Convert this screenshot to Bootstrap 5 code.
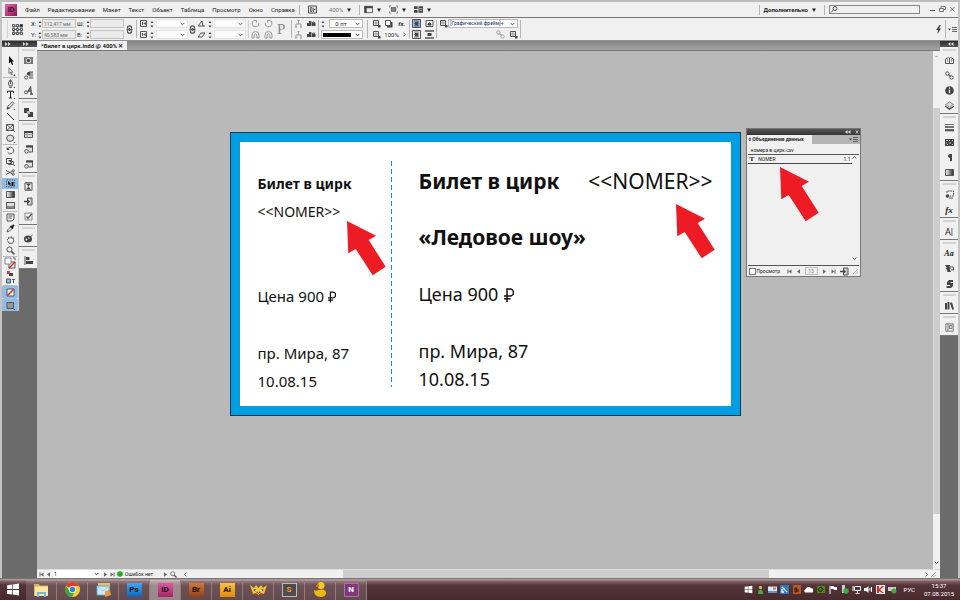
<!DOCTYPE html>
<html lang="ru">
<head>
<meta charset="utf-8">
<meta name="viewport" content="width=device-width, initial-scale=1">
<title>Билет в цирк.indd</title>
<link rel="stylesheet" href="https://cdn.jsdelivr.net/npm/bootstrap@5.3.0/dist/css/bootstrap.min.css">
<style>
:root{--panel:#f0f0f0;--dark:#6b6b6b;--rule:#8a8a8a}
body{font-family:Roboto,"Noto Sans",sans-serif;font-size:6px;line-height:8px;color:#222;background:#ccc}
button,input,select{font:inherit;color:inherit;border:0;padding:0;margin:0;background:transparent;border-radius:0;min-width:0}
svg{display:block;flex:none}
.i{width:9px;height:9px;fill:none;stroke:#555;stroke-width:1}
.i .f,.f{fill:#444;stroke:none}
.app{background:var(--panel);border:2px solid #c4c4c4;border-top-color:#bdbdbd;border-bottom:0}
.menubar{height:16px;border-bottom:1px solid #777;padding-left:3px}
.menubar a{color:#222;text-decoration:none}
.logo{width:12px;height:12px;background:linear-gradient(135deg,#e069a8,#8d1157);color:#2d0019;font-size:7px;line-height:12px;text-align:center;font-weight:600}
.menus{gap:8px;margin-left:8px}
.rule{width:1px;height:10px;background:#b5b5b5;flex:none}
.caret{width:4px;height:4px;fill:#222}
.search{width:91px;height:9px;border:1px solid #888}
.search input{width:100%}
.wbtn{width:10px;height:10px}
.ctl{height:23px;border-bottom:1px solid #909090;padding:0 1px 0 3px}
.ctl .rule{height:18px;margin:0 2px}
.grp{display:grid;grid-template-rows:9px 9px;row-gap:2px;align-items:center;flex:none}
.g-xy{grid-template-columns:7px 4px 34px}
.g-wh{grid-template-columns:9px 4px 34px;margin:0 1px 0 1px}
.g-sc{grid-template-columns:11px 6px 32px}
.g-2{grid-template-columns:9px 9px;column-gap:4px}
.g-st{grid-template-columns:8px 34px}
.g-fx{grid-template-columns:12px 14px 9px}
.fld{height:9px;border:1px solid #c2c2c2;background:#ebebeb;line-height:7px;font-size:5px;color:#666;padding-left:1px;width:100%}
.sel{height:9px;width:100%;background:#fff url("data:image/svg+xml,%3Csvg xmlns='http://www.w3.org/2000/svg' width='5' height='4'%3E%3Cpath d='M.7 1l1.8 1.8L4.3 1' fill='none' stroke='%23444'/%3E%3C/svg%3E") right 2px center no-repeat;border:1px solid #bbb;appearance:none;line-height:7px;padding-left:5px}
.sel.off{border-color:#e2e2e2;opacity:.8}
.sel.obj{padding-left:1px;font-size:5px;color:#14306a}
.stroke{background-image:linear-gradient(#000,#000),url("data:image/svg+xml,%3Csvg xmlns='http://www.w3.org/2000/svg' width='5' height='4'%3E%3Cpath d='M.7 1l1.8 1.8L4.3 1' fill='none' stroke='%23444'/%3E%3C/svg%3E");background-size:28px 4px,5px 4px;background-position:1px center,right 2px center;background-repeat:no-repeat}
.spin{width:4px;height:8px;fill:#444}
.on{background:#8fbde8!important}
.sel-frame{width:70px}
.bigp{font:15px/16px 'Liberation Serif',serif;color:#888;margin:0 4px}
.darkbg{background:var(--dark)}
.dockhead{height:6px;background:linear-gradient(#2e2e2e,#555);color:#ddd}
.dockhead svg{width:6px;height:4px;fill:#ddd;margin-left:3px}
.tools{width:17px;background:var(--panel);border-right:1px solid #ccc;padding:8px 0 0}
.tools button,.dock button{display:flex;width:100%;align-items:center;justify-content:center}
.tools button{height:11px}
.tools hr,.dock hr{margin:0 1px;height:1px;border:0;background:#bbb;opacity:1;flex:none}
.tools .mini{height:8px}
.tools .tall{height:12px}
.dock{background:var(--panel);border-bottom:1px solid #777;padding-top:6px;background-image:linear-gradient(#d4d4d4,#d4d4d4);background-size:calc(100% - 5px) 2px;background-position:center 2px;background-repeat:no-repeat}
.dock button{height:15px}
.dockcol{width:18px}
.tabs{height:10px;background:linear-gradient(#858585,#a2a2a2);border-bottom:1px solid #777}
.tab{height:9px;background:#f2f2f2;padding:0 4px;font-weight:700;width:90px}
.paste{background:#b9b9b9;padding-top:81px}
.stage{width:511px}
.ticket{border:1px solid #173a50;height:284px;padding:9px;background:#009fe3}
.sheet{background:#fff;height:100%;font-family:"Noto Sans","Open Sans",sans-serif;color:#111}
.stub{flex:none;width:151px;padding:28px 0 0 18px;font-size:15px;line-height:28px}
.perf{flex:none;width:1px;height:226px;margin-top:19px;background:repeating-linear-gradient(#009fe3 0 5px,#fff 5px 8px)}
.body-part{min-width:0;padding:25px 0 0 27px;font-size:18px;line-height:28px}
.sheet p{margin:0;white-space:nowrap}
.g28{margin-top:28px!important}.g56{margin-top:56px!important}.g29{margin-top:29px!important}
.ttl{font-weight:700;font-size:21px}
.stub .ttl,.stub .num{font-size:14px}
.num{font-size:21px}
.ruble{width:10px;height:14px;stroke:#111;fill:none;display:inline-block;vertical-align:-1px;margin-left:6px}
.stub .ruble{width:8px;height:12px;margin-left:4px}
.arrow{position:absolute;width:39px;height:55px;fill:#ed1c24}
.a1{left:117px;top:89px}.a2{left:446px;top:72px}.a3{left:33px;top:38px}
.datapanel{position:absolute;left:516px;top:-4px;width:115px;height:149px;background:var(--panel);border:1px solid #777;font-size:5px;line-height:8px}
.dp-head{height:6px;background:linear-gradient(#555,#333)}
.dp-tabs{height:9px;background:#b4b4b4;padding-right:2px}
.dp-tab{background:var(--panel);width:65px;font-weight:700;padding-left:2px;height:9px}
.dp-src{height:11px;padding:2px 3px 0;margin:0 1px;border-bottom:1px solid #555}
.dp-row{height:9px;border-bottom:1px solid #444;margin-left:1px;width:104px;padding:0 1px 0 2px}
.dp-sc{width:8px}
.dp-foot{height:11px;border-top:1px solid #555;margin:0 1px;padding:0 1px}
.dp-foot input[type=checkbox]{appearance:none;width:7px;height:7px;border:1px solid #777;background:#fff;margin-right:1px}
.dp-foot input[type=text]{width:13px;height:8px;border:1px solid #bbb;text-align:center;color:#777;font-size:5px}
.n{width:5px;height:5px;fill:#666;stroke:#666}
.vbar{width:7px;background:var(--panel)}
.vbar .thumb{background:#cdcdcd;border-left:1px solid #ddd;flex:404}
.status{height:9px;border-top:1px solid #ddd;background:var(--panel);font-size:5px;padding-left:2px;gap:2px}
.status .pg{width:48px;height:8px;border:0;padding-left:1px;flex:none}
.hbar{gap:0}
.hthumb{background:#cdcdcd;flex:431;height:8px}
.taskbar{height:22px;background:linear-gradient(#a79496 0 1px,#8a6669 2px,#54353a 6px,#482a2d);border-top:1px solid #777;color:#fff}
.tb{width:31px;height:20px;display:flex;align-items:center;justify-content:center;border-right:1px solid #967b7e;background:#ffffff26}
.tb.start{width:26px}
.tb.cur{background:#ffffff70}
.tb svg{width:17px;height:17px}
.app-ic{width:15px;height:14px;font-size:8px;line-height:14px;font-weight:700;text-align:center;color:#111}
.ps{background:linear-gradient(#45a7ef,#1263b8)}.id{background:linear-gradient(#d65a9c,#a52566)}.br{background:linear-gradient(#cf7840,#924018)}.ai{background:linear-gradient(#ffc13d,#e08a09)}
.sb{background:#4d4d4d;border:1px solid #bbb;color:#f69220;line-height:12px}.on-n{background:#80397b;color:#fff;border:1px solid #a871a4;line-height:12px}
.tray{gap:3px}
.tray svg{width:9px;height:9px}
.clock{line-height:8px;width:34px}
</style>
<script src="https://cdn.jsdelivr.net/npm/bootstrap@5.3.0/dist/js/bootstrap.bundle.min.js"></script>
</head>
<body class="d-flex flex-column vh-100 overflow-hidden">
<svg width="0" height="0" class="position-absolute" aria-hidden="true">
<symbol id="caret" viewBox="0 0 4 4"><path d="M0 .5h4L2 4z"/></symbol>
<symbol id="spin" viewBox="0 0 4 8"><path d="M.5 3L2 1l1.5 2zM.5 5.5h3L2 7.5z"/></symbol>
<symbol id="dbl" viewBox="0 0 6 4"><path d="M0 2l2.5-2v4zM3 2l2.5-2v4z"/></symbol>
<symbol id="dbr" viewBox="0 0 6 4"><path d="M2.5 2L0 0v4zM5.5 2L3 0v4z"/></symbol>
<symbol id="chain" viewBox="0 0 9 9"><path d="M2.500 3.500V2.500a2 1.700 0 014 0v1M2.500 5.500v1a2 1.700 0 004 0v-1M4.500 3v3M1.500 4.500h6" stroke-width="1.300"/></symbol>
<symbol id="scx" viewBox="0 0 9 9"><path d="M1.500 1.500h6v6h-6zM3.500 3v3"/><path class="f" d="M4.200 4.500L6.700 3v3z"/></symbol>
<symbol id="rot" viewBox="0 0 9 9"><path d="M3.500 1.200a3.400 3.400 0 104.300 2.600M3.200 1.300h2.300V3.500" stroke="#999"/></symbol>
<symbol id="rotr" viewBox="0 0 9 9"><path d="M5.500 1.200a3.400 3.400 0 11-4.300 2.600M5.800 1.300H3.500V3.500" stroke="#999"/></symbol>
<symbol id="flip" viewBox="0 0 9 9"><path d="M1 8V5a3.400 3.400 0 017 0v3H5.800V5.200a1.200 1.200 0 00-2.600 0V8z" stroke="#999"/></symbol>
<symbol id="tree" viewBox="0 0 9 9"><path d="M4.500 1v4M2 8V5h5v3M1 8h2M6 8h2M3.500 1.500h2" stroke="#999"/></symbol>
<symbol id="treed" viewBox="0 0 9 9"><path class="f" d="M0 7V4h2V2h2v5zM4.500 7V2l2 2V2l2 2v3z"/></symbol>
<symbol id="dsq" viewBox="0 0 9 9"><path d="M1.500 1.500h5v5h-5z"/><path d="M3 3h2v2H3z" stroke="#999"/><path class="f" d="M6 6h2.500v2.500H6z"/></symbol>
<symbol id="shadow" viewBox="0 0 9 9"><path class="f" d="M3 3h5.500v5.500H3z"/><path d="M1.500 1.500h5v5h-5z" fill="#fff"/></symbol>
<symbol id="wrap1" viewBox="0 0 9 9"><path d="M.5.5h8v8h-8z"/><path class="f" d="M3 3h3.500v3.500H3z"/><path d="M2 2h5M2 4.500h1M2 7h5" stroke-width=".8"/></symbol>
<symbol id="wrap2" viewBox="0 0 9 9"><path d="M1 1.500h7v6H1z"/><path d="M2.500 5.500l2-2 2 2"/><path class="f" d="M3 4h3v2.500H3z"/></symbol>
<symbol id="wrap3" viewBox="0 0 9 9"><path d="M0 1h9M0 8h9" stroke-width="1.500"/><path class="f" d="M2.500 3h4v3h-4z"/></symbol>
<symbol id="bolt" viewBox="0 0 9 9"><path class="f" d="M5.500 0L2 5h2L3.500 9 7 3.500H5L7 0z"/></symbol>
<symbol id="pmenu" viewBox="0 0 9 9"><path class="f" d="M0 3.500h3L1.500 5.500z"/><path d="M4 2.500h5M4 4.500h5M4 6.500h5" stroke-width=".9"/></symbol>
<symbol id="ptr" viewBox="0 0 9 9"><path class="f" d="M3 0v7.500l1.700-1.600L6 9l1.200-.6L6 5.500h2z" style="fill:#111"/></symbol>
<symbol id="ptrw" viewBox="0 0 9 9"><path d="M3 .8v5.700l1.500-1.300L5.500 8l.8-.5-1-2.300h1.500z" fill="#fff" stroke-width=".8"/><path class="f" d="M7 9h2V7z"/></symbol>
<symbol id="pen" viewBox="0 0 9 9"><path d="M4.500.5L2.300 4l1 3h2.500l1-3zM4.500 1v4M3 8.300h3"/><path class="f" d="M7.500 9H9V7.500z"/></symbol>
<symbol id="typ" viewBox="0 0 9 9"><path d="M1.500 3V1.200h6V3M4.500 1v7M3 8h3" stroke="#222"/><path class="f" d="M7.500 9H9V7.500z"/></symbol>
<symbol id="pencil" viewBox="0 0 9 9"><path d="M1 8l.6-2.500L6.500.8l1.500 1.500-5 5z"/><path class="f" d="M1 8.500l.6-3 2.400 2zM7.500 9H9V7.500z"/></symbol>
<symbol id="line" viewBox="0 0 9 9"><path d="M1 1l7 7" stroke="#333"/></symbol>
<symbol id="xbox" viewBox="0 0 9 9"><path d="M.5 1.500h7v6h-7zM.5 1.500l7 6M7.500 1.500l-7 6"/><path class="f" d="M7.500 9H9V7.500z"/></symbol>
<symbol id="ell" viewBox="0 0 9 9"><ellipse cx="4.200" cy="4.200" rx="3.500" ry="3.200" fill="#ddd"/><path class="f" d="M7.500 9H9V7.500z"/></symbol>
<symbol id="rotate" viewBox="0 0 9 9"><path d="M2 2.300a3.300 3.300 0 11-.4 3.900" stroke-dasharray="5 .7"/><path class="f" d="M.7 1v3h3z"/></symbol>
<symbol id="scale" viewBox="0 0 9 9"><path d="M.5 1.500h5v5h-5zM5.500 4.500h2v3h-5v-1"/><path class="f" d="M2 3h3v3zM7.500 9H9V7.500z"/></symbol>
<symbol id="sciss" viewBox="0 0 9 9"><path d="M0 2.500l6 3M0 6.500l6-3"/><circle cx="7.200" cy="2.800" r="1.100"/><circle cx="7.200" cy="6.200" r="1.100"/></symbol>
<symbol id="free" viewBox="0 0 9 9"><path d="M.5 1h8v7h-8z" stroke-dasharray="1.500 1"/><path class="f" d="M2 2v4l1-1 1 2 1-.5-1-2h1zM5.500 3h2v4h-2z" style="fill:#111"/></symbol>
<linearGradient id="gr"><stop stop-color="#fff"/><stop offset="1" stop-color="#222"/></linearGradient>
<symbol id="grad" viewBox="0 0 9 9"><path d="M.5 1.500h8v6h-8z" fill="url(#gr)"/></symbol>
<symbol id="feath" viewBox="0 0 9 9"><path d="M.5 1.500h8v6h-8z" fill="#ddd"/><path class="f" d="M1 5h7v2.500H1z" style="fill:#888"/></symbol>
<symbol id="note" viewBox="0 0 9 9"><path d="M1 1h7v5L6 8H1zM2.500 3h4M2.500 5h3"/></symbol>
<symbol id="eye" viewBox="0 0 9 9"><path d="M1 8l1-2.500 3-3 1.500 1.500-3 3z" fill="#fff"/><path d="M4.500 2l2.500 2.500M6 3l2-2" stroke-width="1.800" stroke="#222"/></symbol>
<symbol id="hand" viewBox="0 0 9 9"><path d="M2 5L1 4M3 8.300L1.500 5.500M2.500 4V2M4 3.500v-2M5.500 3.500v-2M7 4V2.500l.8 3L6.500 8.300H3" stroke-width=".9"/></symbol>
<symbol id="zoomi" viewBox="0 0 9 9"><circle cx="3.500" cy="3.500" r="2.600"/><path d="M5.400 5.400l3 3" stroke-width="1.700"/></symbol>
<symbol id="fs" viewBox="0 0 12 12"><path d="M5 5h6v6H5z" fill="#fff"/><path d="M5 11l6-6" stroke="#e22" stroke-width="1.500"/><path d="M1 1h6v6H1z" fill="#fff" stroke="#888"/><path d="M9 1h2v2"/></symbol>
<symbol id="fmt" viewBox="0 0 9 9"><path d="M.5 2h4v4h-4z" fill="#8fbde8"/><path d="M6 2.500h3M7.500 3v3"/></symbol>
<symbol id="mix" viewBox="0 0 9 9"><path class="f" d="M1 2h3v3H1z" style="fill:#c44"/><path class="f" d="M3 4h4v3H3z"/></symbol>
<symbol id="none" viewBox="0 0 9 9"><path d="M1 1h7v7H1z" fill="#fff"/><path d="M1.500 7.500l6-6" stroke="#e22" stroke-width="1.600"/></symbol>
<symbol id="scr" viewBox="0 0 9 9"><path d="M1 1.500h6.500v6H1z" fill="#999"/><path class="f" d="M7.500 9H9V7.500z"/></symbol>
<symbol id="dotbox" viewBox="0 0 9 9"><path class="f" d="M0 1h9v7H0z" style="fill:#777"/><circle cx="4.500" cy="4.500" r="2.500" fill="#eee" stroke="none"/><circle cx="4.500" cy="4.500" r="1.700" class="f"/></symbol>
<symbol id="pstyle" viewBox="0 0 9 9"><path d="M5 1h4M6 1v7M8 1v7"/><path class="f" d="M6 1H4.500a1.700 1.700 0 000 3.400H6z"/><circle cx="2.200" cy="6.500" r="1.600"/></symbol>
<symbol id="cstyle" viewBox="0 0 9 9"><path d="M3.500 6.500L6.500 1l1 7M4.500 5h3M6 8h3" stroke-width="1.300"/><circle cx="2" cy="6.300" r="1.500"/></symbol>
<symbol id="path" viewBox="0 0 9 9"><path class="f" d="M0 0h5v5H0zM4 4h5v5H4z"/><path d="M3 3h3v3H3z" fill="#bbb" stroke="none"/></symbol>
<symbol id="tbl" viewBox="0 0 9 9"><path d="M.5 1.500h8v6h-8z" fill="#ddd"/><path d="M3 1v7M.5 4.500h8" stroke="#999"/><path class="f" d="M0 1h9v2H0z"/></symbol>
<symbol id="tblc" viewBox="0 0 9 9"><path d="M2.500 1h6v6H4.500" fill="#ddd"/><path class="f" d="M2 .5h7v2H2z"/><circle cx="2.500" cy="6.300" r="1.800" fill="#eee"/></symbol>
<symbol id="hour" viewBox="0 0 9 9"><path d="M1 .7h7v7.600H1z"/><path class="f" d="M2 1.500h5L4.500 4.500 7 7.500H2l2.500-3z"/></symbol>
<symbol id="into" viewBox="0 0 9 9"><path d="M3.500 1h4.500v7H3.500z" fill="#ccc"/><path class="f" d="M0 3.800h3V2l3 2.500L3 7V5.200H0z"/></symbol>
<symbol id="check" viewBox="0 0 9 9"><path d="M1 1h7v7H1z" stroke="#888"/><path d="M2.500 4.500l1.500 2L7.500 2" stroke-width="1.300"/></symbol>
<symbol id="pal" viewBox="0 0 9 9"><ellipse cx="4" cy="5" rx="4" ry="3.500" class="f"/><circle cx="2.500" cy="5.500" r=".9" fill="#fff" stroke="none"/><circle cx="5" cy="4" r=".8" fill="#fff" stroke="none"/><path d="M5 4l3.500-3"/></symbol>
<symbol id="align" viewBox="0 0 9 9"><path d="M1 0v9"/><path class="f" d="M2 1h3.500v3H2zM2 5h7v3H2z"/></symbol>
<symbol id="book" viewBox="0 0 9 9"><path d="M4.500 2v6M.5 3l3-1.500 1 .8 1-.8 3 1.500v4.500h-8z"/><path d="M2.500 3v3M6.500 3v3" stroke="#999"/></symbol>
<symbol id="links" viewBox="0 0 9 9"><circle cx="2.300" cy="2.500" r="1.700"/><circle cx="6.500" cy="6.500" r="1.700"/><path d="M3.500 3.500l2 2" stroke-width="1.500"/></symbol>
<symbol id="info" viewBox="0 0 9 9"><circle cx="4.500" cy="4.500" r="4.300" class="f"/><path d="M4.500 1.500v1.200M4.500 3.800v3.500" stroke="#fff" stroke-width="1.300"/></symbol>
<symbol id="layers" viewBox="0 0 9 9"><path d="M4.500 1L.5 3.500l4 2.500 4-2.500z" fill="#ddd" stroke-width=".6"/><path class="f" d="M0 4.500l4.500 2.700L9 4.500v1.200L4.500 9 0 5.700z"/></symbol>
<symbol id="lines" viewBox="0 0 9 9"><path d="M0 1.500h9" stroke-width=".8"/><path d="M0 4h9" stroke-width="1.600"/><path d="M0 7.200h9" stroke-width="2.200"/></symbol>
<symbol id="sw" viewBox="0 0 9 9"><path class="f" d="M0 1h9v7H0z"/><path d="M1 2.500h2M4 2.500h1M7 2.500h1M1 5h1M4 5h2M7 6.500h1M2 6.500h1" stroke="#ddd" stroke-width=".8"/></symbol>
<symbol id="para" viewBox="0 0 9 9"><path class="f" d="M7 1v7H6V2v6H5V5a2 2 0 010-4z"/></symbol>
<symbol id="obst" viewBox="0 0 9 9"><path d="M2 3V1h6.500v5H5" stroke-dasharray="2 .6"/><circle cx="2.500" cy="6" r="1.800" class="f"/><path d="M4 8h4"/></symbol>
<symbol id="scrp" viewBox="0 0 9 9"><path class="f" d="M0 1h5v1.500H4l2 2.500H4.500L6 8H3L1.500 6.500h1L.5 4H2z"/><path d="M5 3h3.500v3H6"/></symbol>
<symbol id="scrp2" viewBox="0 0 9 9"><path class="f" d="M2 3l2-2h4v2H5.500v1H8v3L6 9H1.500V7H5V6H2z"/></symbol>
<symbol id="lib" viewBox="0 0 9 9"><path class="f" d="M0 2h2v6.500H0zM2.500 1h2v7.500h-2zM5 2l2-.7 2 7-1.800.4z"/></symbol>
<symbol id="page" viewBox="0 0 9 9"><path d="M.8.8h7.400v7.400H.8zM3 1v7M4.500 2.500h2.500v3H4.500z" stroke="#777"/></symbol>
<symbol id="layt" viewBox="0 0 10 9"><path d="M.5 1h9v7h-9z"/><path class="f" d="M.5 1h9v2h-9zM1 1h2v7H1z"/></symbol>
<symbol id="scrm" viewBox="0 0 10 9"><path d="M2.500 2.500h5v4h-5z" fill="#888"/><path d="M.5 2.500V.5h2M7.500.5h2v2M.5 6.500v2h2M9.500 6.500v2h-2" stroke="#888"/></symbol>
<symbol id="arr" viewBox="0 0 10 9"><path class="f" d="M0 1h4v3H0zM0 5h4v3H0zM5 1h5v7H5z"/><path d="M6 3.500h3M6 5.500h3" stroke="#ccc"/></symbol>
<symbol id="first" viewBox="0 0 5 5"><path d="M1 .5v4" fill="none"/><path d="M4.500.5v4l-3-2z" stroke="none"/></symbol>
<symbol id="prev" viewBox="0 0 5 5"><path d="M4 .3v4.400l-3-2.200z" stroke="none"/></symbol>
<symbol id="next" viewBox="0 0 5 5"><path d="M1 .3v4.400l3-2.200z" stroke="none"/></symbol>
<symbol id="last" viewBox="0 0 5 5"><path d="M4 .5v4" fill="none"/><path d="M.5.5v4l3-2z" stroke="none"/></symbol>
<symbol id="up" viewBox="0 0 5 5"><path d="M.7 3.500l1.800-2 1.800 2" fill="none"/></symbol>
<symbol id="down" viewBox="0 0 5 5"><path d="M.7 1.500l1.800 2 1.800-2" fill="none"/></symbol>
<symbol id="lt" viewBox="0 0 5 5"><path d="M3.500.7l-2 1.800 2 1.800" fill="none"/></symbol>
<symbol id="gt" viewBox="0 0 5 5"><path d="M1.500.7l2 1.800-2 1.800" fill="none"/></symbol>
<symbol id="grow" viewBox="0 0 5 5"><path d="M0 5l5-5M2.500 5L5 2.500" stroke="#aaa"/></symbol>
<symbol id="arrow" viewBox="0 0 39 55"><path d="M0 0l29 14.700-7.300 4.300 17 26.700-13 8.600L8.700 28l-7.400 4.300z"/></symbol>
<symbol id="rub" viewBox="0 0 10 14"><path d="M3 14V1h3a3.400 3.400 0 010 7H0M0 10.800h6.500" stroke-width="1.500"/></symbol>
<symbol id="win" viewBox="0 0 14 14"><path fill="#fff" stroke="none" d="M1 2.800l5-.8v4.600H1zM6.700 1.900L13 1v5.600H6.700zM1 7.400h5V12l-5-.8zM6.700 7.400H13V13l-6.300-.9z"/></symbol>
</svg>

<div class="app d-flex flex-column flex-fill overflow-hidden">
<header class="menubar d-flex align-items-center flex-shrink-0">
  <span class="logo">ID</span>
  <nav class="menus d-flex">
    <a href="#">Файл</a><a href="#">Редактирование</a><a href="#">Макет</a><a href="#">Текст</a><a href="#">Объект</a><a href="#">Таблица</a><a href="#">Просмотр</a><a href="#">Окно</a><a href="#">Справка</a>
  </nav>
  <span class="rule ms-1 me-2"></span>
  <button aria-label="Bridge" class="me-2"><svg class="i"><path d="M.5 1h8v7h-8z" fill="#ddd"/><path d="M2.500 2.500v4H4v-4zM5.500 3v4M6 4.500h1.500" stroke-width=".8"/></svg></button>
  <button class="d-flex align-items-center gap-1 ms-1 me-2 text-secondary">400% <svg class="caret"><use href="#caret"/></svg></button>
  <span class="rule"></span>
  <button class="d-flex align-items-center gap-1 ms-1" aria-label="Параметры просмотра"><svg class="i"><use href="#layt"/></svg><svg class="caret"><use href="#caret"/></svg></button>
  <button class="d-flex align-items-center gap-1 ms-2" aria-label="Режим экрана"><svg class="i"><use href="#scrm"/></svg><svg class="caret"><use href="#caret"/></svg></button>
  <button class="d-flex align-items-center gap-1 ms-2" aria-label="Упорядочить документы"><svg class="i"><use href="#arr"/></svg><svg class="caret"><use href="#caret"/></svg></button>
  <span class="rule ms-auto me-1"></span>
  <button class="d-flex align-items-center fw-bold gap-1 me-1">Дополнительно <svg class="caret"><use href="#caret"/></svg></button>
  <span class="rule mx-1"></span>
  <label class="search d-flex align-items-center me-1"><svg class="i" viewBox="0 0 9 9"><circle cx="5" cy="3.500" r="2"/><path d="M3.500 5L1 7.500"/></svg><input type="search" aria-label="Поиск"></label>
  <button class="wbtn ms-1" aria-label="Свернуть"><svg class="i"><path d="M2 5.500h5"/></svg></button>
  <button class="wbtn" aria-label="Восстановить"><svg class="i"><path d="M1.500 3.500h4v3h-4zM3 3V1.500h4.500v3H6" stroke="#777"/></svg></button>
  <button class="wbtn" aria-label="Закрыть"><svg class="i"><path d="M2 2l4.500 4.500M6.500 2L2 6.500" stroke="#777"/></svg></button>
</header>

<section class="ctl d-flex align-items-center flex-shrink-0" aria-label="Управление">
  <span class="rule me-1 opacity-50"></span>
  <svg width="11" height="11" viewBox="0 0 11 11" class="me-1" fill="#fff" stroke="#444" stroke-width=".9"><path d="M2 2h7v7H2zM5.500 2v7M2 5.500h7"/><path d="M.5.500h2.200v2.200H.500zM4.400.500h2.200v2.200H4.400zM.500 4.400h2.200v2.200H.500zM4.400 4.400h2.200v2.200H4.400zM8.300 4.400h2.200v2.200H8.300zM.500 8.300h2.200v2.200H.500zM4.400 8.300h2.200v2.200H4.400zM8.300 8.300h2.200v2.200H8.300z"/><path fill="#000" d="M8.300.500h2.200v2.200H8.300z"/></svg>
  <div class="grp g-xy ms-1"><label for="x">X:</label><svg class="spin"><use href="#spin"/></svg><input id="x" class="fld" value="112,417 мм"><label for="y">Y:</label><svg class="spin"><use href="#spin"/></svg><input id="y" class="fld" value="40,583 мм"></div>
  <div class="grp g-wh"><label for="w">Ш:</label><svg class="spin"><use href="#spin"/></svg><input id="w" class="fld"><label for="h">В:</label><svg class="spin"><use href="#spin"/></svg><input id="h" class="fld"></div>
  <svg class="i"><use href="#chain"/></svg>
  <span class="rule"></span>
  <div class="grp g-sc"><svg class="i"><use href="#scx"/></svg><svg class="spin"><use href="#spin"/></svg><select class="sel off" aria-label="Масштаб X"></select><svg class="i"><use href="#scx"/></svg><svg class="spin"><use href="#spin"/></svg><select class="sel off" aria-label="Масштаб Y"></select></div>
  <svg class="i"><use href="#chain"/></svg>
  <div class="grp g-sc"><svg class="i"><path d="M1 7h7M1 7l4-5 1 5"/></svg><svg class="spin"><use href="#spin"/></svg><select class="sel off" aria-label="Поворот"></select><svg class="i"><path d="M1 7h4l3-4H4z"/></svg><svg class="spin"><use href="#spin"/></svg><select class="sel off" aria-label="Наклон"></select></div>
  <span class="rule opacity-50"></span>
  <div class="grp g-2"><svg class="i"><use href="#rot"/></svg><svg class="i"><use href="#rotr"/></svg><svg class="i"><use href="#flip"/></svg><svg class="i"><use href="#flip"/></svg></div>
  <span class="bigp">P</span>
  <span class="rule"></span>
  <div class="grp g-2"><svg class="i"><use href="#tree"/></svg><svg class="i"><use href="#treed"/></svg><svg class="i"><use href="#tree"/></svg><svg class="i"><use href="#treed"/></svg></div>
  <span class="rule"></span>
  <div class="grp g-st"><svg class="spin"><use href="#spin"/></svg><select class="sel" aria-label="Толщина"><option>0 пт</option></select><select class="sel stroke" style="grid-column:1/3" aria-label="Тип обводки"></select></div>
  <span class="rule mx-1"></span>
  <div class="grp g-fx"><svg class="i"><use href="#dsq"/></svg><svg class="i"><use href="#shadow"/></svg><i class="fw-bold">fx.</i><svg class="i"><use href="#dsq"/></svg><span class="bg-white text-nowrap">100%</span><svg class="n ms-1"><use href="#gt"/></svg></div>
  <span class="rule"></span>
  <div class="grp g-2"><svg class="i on"><use href="#wrap1"/></svg><svg class="i"><use href="#wrap2"/></svg><svg class="i"><use href="#wrap1"/></svg><svg class="i"><use href="#wrap3"/></svg></div>
  <span class="rule"></span>
  <div class="d-flex flex-column" style="gap:2px">
    <div class="d-flex"><svg class="i"><use href="#dsq"/></svg><select class="sel obj sel-frame" aria-label="Стиль объекта"><option>[Графический фрейм]+</option></select></div>
    <div class="d-flex justify-content-end gap-1"><svg class="i opacity-50"><use href="#links"/></svg><svg class="i"><use href="#dsq"/></svg></div>
  </div>
  <span class="rule"></span>
  <svg class="i ms-auto"><use href="#bolt"/></svg><span class="rule"></span><svg class="i"><use href="#pmenu"/></svg>
</section>

<main class="d-flex flex-fill overflow-hidden">
  <aside class="darkbg d-flex flex-column flex-shrink-0" aria-label="Инструменты">
    <div class="dockhead d-flex align-items-center gap-2"><svg><use href="#dbr"/></svg><svg class="ms-1"><use href="#dbr"/></svg></div>
    <div class="d-flex align-items-start">
      <div class="tools">
        <button aria-label="Выделение"><svg class="i"><use href="#ptr"/></svg></button><button aria-label="Прямое выделение"><svg class="i"><use href="#ptrw"/></svg></button><hr>
        <button aria-label="Перо"><svg class="i"><use href="#pen"/></svg></button><button aria-label="Текст"><svg class="i"><use href="#typ"/></svg></button><button aria-label="Карандаш"><svg class="i"><use href="#pencil"/></svg></button><button aria-label="Линия"><svg class="i"><use href="#line"/></svg></button><button aria-label="Фрейм"><svg class="i"><use href="#xbox"/></svg></button><button aria-label="Эллипс"><svg class="i"><use href="#ell"/></svg></button><hr>
        <button aria-label="Поворот"><svg class="i"><use href="#rotate"/></svg></button><button aria-label="Масштаб"><svg class="i"><use href="#scale"/></svg></button><button aria-label="Ножницы"><svg class="i"><use href="#sciss"/></svg></button><button class="on" aria-label="Свободное трансформирование"><svg class="i"><use href="#free"/></svg></button><button aria-label="Градиент"><svg class="i"><use href="#grad"/></svg></button><button aria-label="Растушевка"><svg class="i"><use href="#feath"/></svg></button><hr>
        <button aria-label="Заметка"><svg class="i"><use href="#note"/></svg></button><button aria-label="Пипетка"><svg class="i"><use href="#eye"/></svg></button><button aria-label="Рука"><svg class="i"><use href="#hand"/></svg></button><button aria-label="Лупа"><svg class="i"><use href="#zoomi"/></svg></button><hr>
        <button class="tall" aria-label="Заливка и обводка"><svg class="i" style="width:12px;height:12px"><use href="#fs"/></svg></button><button class="mini" aria-label="По умолчанию"><svg class="i"><use href="#mix"/></svg></button><button class="mini" aria-label="Форматирование"><svg class="i"><use href="#fmt"/></svg></button><hr>
        <button class="on tall" aria-label="Без цвета"><svg class="i"><use href="#none"/></svg></button><hr><button class="on tall" aria-label="Режим экрана"><svg class="i"><use href="#scr"/></svg></button>
      </div>
      <div class="dockcol">
        <div class="dock"><button aria-label="Образец"><svg class="i"><use href="#dotbox"/></svg></button><button aria-label="Стили абзацев"><svg class="i"><use href="#pstyle"/></svg></button><button aria-label="Стили символов"><svg class="i"><use href="#cstyle"/></svg></button></div>
        <div class="dock"><button aria-label="Обработка контуров"><svg class="i"><use href="#path"/></svg></button></div>
        <div class="dock"><button aria-label="Таблица"><svg class="i"><use href="#tbl"/></svg></button><button aria-label="Стили таблиц"><svg class="i"><use href="#tblc"/></svg></button><button aria-label="Стили ячеек"><svg class="i"><use href="#tblc"/></svg></button></div>
        <div class="dock"><button aria-label="Сценарии"><svg class="i"><use href="#hour"/></svg></button><button aria-label="Импорт"><svg class="i"><use href="#into"/></svg></button><button aria-label="Проверка"><svg class="i"><use href="#check"/></svg></button></div>
        <div class="dock"><button aria-label="Цвет"><svg class="i"><use href="#pal"/></svg></button></div>
        <div class="dock"><button aria-label="Выравнивание"><svg class="i"><use href="#align"/></svg></button></div>
      </div>
    </div>
  </aside>

  <div class="d-flex flex-column flex-fill">
    <div class="tabs flex-shrink-0"><div class="tab d-flex align-items-center justify-content-between"><span>*Билет в цирк.indd @ 400%</span><button aria-label="Закрыть вкладку">✕</button></div></div>
    <div class="d-flex flex-fill overflow-hidden">
      <div class="paste flex-fill overflow-hidden">
        <div class="stage mx-auto position-relative">
          <article class="ticket">
            <div class="sheet d-flex">
              <section class="stub"><p class="ttl">Билет в цирк</p><p class="num">&lt;&lt;NOMER&gt;&gt;</p><p class="g56">Цена 900<svg class="ruble" aria-label="₽"><use href="#rub"/></svg></p><p class="g29">пр. Мира, 87</p><p>10.08.15</p></section>
              <div class="perf"></div>
              <section class="body-part flex-fill"><div class="d-flex justify-content-between" style="padding-right:18px"><p class="ttl">Билет в цирк</p><p class="num">&lt;&lt;NOMER&gt;&gt;</p></div><p class="ttl g28">«Ледовое шоу»</p><p class="g29">Цена 900<svg class="ruble" aria-label="₽"><use href="#rub"/></svg></p><p class="g29">пр. Мира, 87</p><p>10.08.15</p></section>
            </div>
          </article>
          <svg class="arrow a1"><use href="#arrow"/></svg><svg class="arrow a2"><use href="#arrow"/></svg>
          <section class="datapanel d-flex flex-column" aria-label="Объединение данных">
            <div class="dp-head dockhead d-flex justify-content-end align-items-center"><svg><use href="#dbl"/></svg><svg viewBox="0 0 5 5"><path d="M1 .5l3 4M4 .5l-3 4" stroke="#ddd"/></svg></div>
            <div class="dp-tabs d-flex justify-content-between"><span class="dp-tab">◊ Объединение данных</span><svg class="i"><use href="#pmenu"/></svg></div>
            <div class="dp-src">номера в цирк.csv</div>
            <div class="d-flex flex-fill justify-content-between"><div><div class="dp-row d-flex align-items-center"><b class="me-1" style="font-family:'Liberation Serif',serif;font-size:7px">T</b><span>NOMER</span><span class="ms-auto">1.1</span></div></div><div class="dp-sc d-flex flex-column justify-content-between pb-1"><svg class="n"><use href="#up"/></svg><svg class="n"><use href="#down"/></svg></div></div>
            <div class="dp-foot d-flex align-items-center"><input type="checkbox" id="pv"><label for="pv" class="me-auto">Просмотр</label><svg class="n me-1"><use href="#first"/></svg><svg class="n me-1"><use href="#prev"/></svg><input type="text" value="13" aria-label="Запись"><svg class="n ms-1"><use href="#next"/></svg><svg class="n mx-1"><use href="#last"/></svg><svg class="i"><use href="#into"/></svg><svg class="n ms-1"><use href="#grow"/></svg></div>
            <svg class="arrow a3"><use href="#arrow"/></svg>
          </section>
        </div>
      </div>
      <div class="vbar d-flex flex-column align-items-center"><svg class="n my-1" style="height:3px"><use href="#up"/></svg><div style="flex:46"></div><div class="thumb w-100"></div><div style="flex:46"></div><svg class="n mb-1"><use href="#down"/></svg></div>
    </div>
    <footer class="status d-flex align-items-center flex-shrink-0">
      <svg class="n"><use href="#first"/></svg><svg class="n"><use href="#prev"/></svg><select class="sel pg" aria-label="Страница"><option>1</option></select><svg class="n"><use href="#next"/></svg><svg class="n"><use href="#last"/></svg>
      <svg width="6" height="6"><circle cx="3" cy="3" r="2.800" fill="#1faa1f"/></svg><span>Ошибок нет</span><svg class="n ms-2"><use href="#next"/></svg><svg class="i" style="width:7px;height:7px"><use href="#zoomi"/></svg><svg class="n ms-1"><use href="#lt"/></svg>
      <div class="hbar d-flex flex-fill"><div style="flex:155"></div><div class="hthumb"></div><div style="flex:155"></div></div><svg class="n"><use href="#gt"/></svg><svg class="n me-1"><use href="#grow"/></svg>
    </footer>
  </div>

  <aside class="darkbg flex-shrink-0" aria-label="Панели">
    <div class="dockhead d-flex align-items-center justify-content-end"><svg class="me-1"><use href="#dbl"/></svg></div>
    <div class="dockcol">
      <div class="dock"><button aria-label="Страницы"><svg class="i"><use href="#book"/></svg></button><button aria-label="Связи"><svg class="i"><use href="#links"/></svg></button><button aria-label="Инфо"><svg class="i"><use href="#info"/></svg></button><button aria-label="Слои"><svg class="i"><use href="#layers"/></svg></button></div>
      <div class="dock"><button aria-label="Обводка"><svg class="i"><use href="#lines"/></svg></button><button aria-label="Образцы"><svg class="i"><use href="#sw"/></svg></button><button aria-label="Абзац"><svg class="i"><use href="#para"/></svg></button><button aria-label="Градиент"><svg class="i"><use href="#grad"/></svg></button></div>
      <div class="dock"><button aria-label="Стили объектов"><svg class="i"><use href="#obst"/></svg></button><button aria-label="Эффекты" style="font:italic bold 9px 'Liberation Serif',serif">fx</button></div>
      <div class="dock"><button style="font-size:9px" aria-label="Символ">A|</button></div>
      <div class="dock"><button style="font:italic bold 8px 'Liberation Serif',serif" aria-label="Глифы">Aa</button><button aria-label="Скрипты"><svg class="i"><use href="#scrp"/></svg></button><button aria-label="Метка"><svg class="i"><use href="#scrp2"/></svg></button></div>
      <div class="dock"><button aria-label="Библиотека"><svg class="i"><use href="#lib"/></svg></button></div>
      <div class="dock"><button aria-label="Объединение данных"><svg class="i"><use href="#page"/></svg></button></div>
    </div>
  </aside>
</main>
</div>

<footer class="taskbar d-flex align-items-center flex-shrink-0">
  <button class="tb start bg-transparent border-0" aria-label="Пуск"><svg viewBox="0 0 14 14" style="width:14px"><use href="#win"/></svg></button>
  <button class="tb" aria-label="Проводник"><svg viewBox="0 0 17 17"><path d="M1 3h5l1 1.500h8V15H1z" fill="#d9b652"/><path d="M2 5.500h13V15H2z" fill="#f8e8a0"/><path d="M4 16v-5h9v5h-2v-3H6v3z" fill="#72b9e6"/></svg></button>
  <button class="tb" aria-label="Chrome"><svg viewBox="0 0 17 17"><circle cx="8.500" cy="8.500" r="7.500" fill="#f6cf2b"/><path d="M8.500 8.500L2 4.700A7.500 7.500 0 0115 5H8.500z" fill="#dd3c31"/><path d="M2 4.700A7.500 7.500 0 008 16l3-6-5.500 0z" fill="#3da24a"/><circle cx="8.500" cy="8.500" r="3.600" fill="#fff"/><circle cx="8.500" cy="8.500" r="2.800" fill="#3c80d8"/></svg></button>
  <button class="tb" aria-label="Почта"><svg viewBox="0 0 17 17"><path d="M3 2h12v9H3z" fill="#e6c05a"/><path d="M2 5h12v9H2z" fill="#cfe9f7" stroke="#58a8d4"/><path d="M2 5l6 5 6-5" fill="none" stroke="#9bcbe6"/><path d="M10 10l5-1 1 5-6 2z" fill="#e49b3d"/></svg></button>
  <button class="tb"><span class="app-ic ps">Ps</span></button>
  <button class="tb cur"><span class="app-ic id">ID</span></button>
  <button class="tb"><span class="app-ic br">Br</span></button>
  <button class="tb"><span class="app-ic ai">Ai</span></button>
  <button class="tb" aria-label="Корона"><svg viewBox="0 0 17 17"><path d="M0 4l4 3 2-3 2.500 3L11 4l2 3 4-3-3 9-3-1-2.500 2L6 12l-3 1z" fill="#f8c52c"/><path d="M3 9l2-1 3.500 4L12 8l2 1-3 2-2.500 2L6 11z" fill="#c82c24"/><path d="M5 9h2v1.500H5zM10 9h2v1.500h-2z" fill="#fff"/></svg></button>
  <button class="tb"><span class="app-ic sb">S</span></button>
  <button class="tb" aria-label="Утка"><svg viewBox="0 0 17 17"><circle cx="9" cy="4.500" r="3.500" fill="#fbc91d"/><path d="M2 9c3 2 6-2 10 0 4 2 2 7-3 7S2 13 2 9z" fill="#f3b610"/><path d="M4 4l3-.5v2.500L4 6z" fill="#e5680e"/></svg></button>
  <button class="tb"><span class="app-ic on-n">N</span></button>
  <div class="tray d-flex align-items-center ms-auto">
    <svg viewBox="0 0 14 14"><use href="#win"/></svg>
    <svg viewBox="0 0 9 9"><circle cx="4.500" cy="2.500" r="1.700" fill="#dfb33e"/><path d="M2 9c0-6 5-6 5 0z" fill="#49a942"/></svg>
    <svg viewBox="0 0 9 9"><path d="M0 1.500h9v6H0z" fill="#cfe8fa"/><path d="M5 2.500h3v2H5z" fill="#ef6b3b"/><path d="M0 6h9v1.500H0z" fill="#4a9bdc"/></svg>
    <svg viewBox="0 0 9 9"><path d="M0 0h9v9H0z" fill="#2f78bd"/><path d="M2 2l5 5M2 4v3h2" stroke="#fff" stroke-width="1.300" fill="none"/></svg>
    <svg viewBox="0 0 9 9"><path d="M1 0h8v9H1z" fill="#b55a25"/><path d="M3 3v4h1.500V3zM6 4v3" stroke="#3a1505" fill="none"/></svg>
    <svg viewBox="0 0 9 9"><path d="M1 7.500a2 2 0 011-3.500 2.700 2.700 0 015-.5 2 2 0 011.500 4z" fill="#fff"/></svg>
    <svg viewBox="0 0 9 9"><path d="M1 1h8v7H1z" fill="#4c8a12"/><path d="M2 4.500c2-3 4-2 5 0-2 3-4 2-5 0z" stroke="#101" fill="none"/></svg>
    <svg viewBox="0 0 9 9"><path d="M2 1v8" stroke="#fff"/><path d="M2.500 1h3l.5 1h3v3H6l-.5-1h-3z" fill="#fff"/></svg>
    <svg viewBox="0 0 9 9"><path d="M2 0h3v8H2z" fill="#ccc"/><circle cx="6" cy="6" r="2.800" fill="#36ae3a"/></svg>
    <svg viewBox="0 0 9 9"><path d="M2.500 1.500h6v4h-6zM5.500 6v2M3.500 8.300h4M1 1v5" stroke="#fff" fill="none"/></svg>
    <svg viewBox="0 0 9 9"><path d="M0 3h2l2.500-2v7L2 6H0z" fill="#fff"/><path d="M6 3v3M7.500 2v5" stroke="#fff"/></svg>
    <svg viewBox="0 0 9 9"><path d="M0 0h9v9H0z" fill="#eee"/><path d="M1 8V1h2v3l3-3h2L4 5l4 3H6L3 6v2z" fill="#d22"/></svg>
    <svg viewBox="0 0 9 9"><path d="M0 2h8v4H0z" fill="#ccc"/><circle cx="6" cy="6" r="2.500" fill="#36ae3a"/></svg>
    <span class="ms-1 me-1">РУС</span>
    <span class="clock text-center me-1">15:37<br>07.08.2015</span>
  </div>
</footer>
</body>
</html>
